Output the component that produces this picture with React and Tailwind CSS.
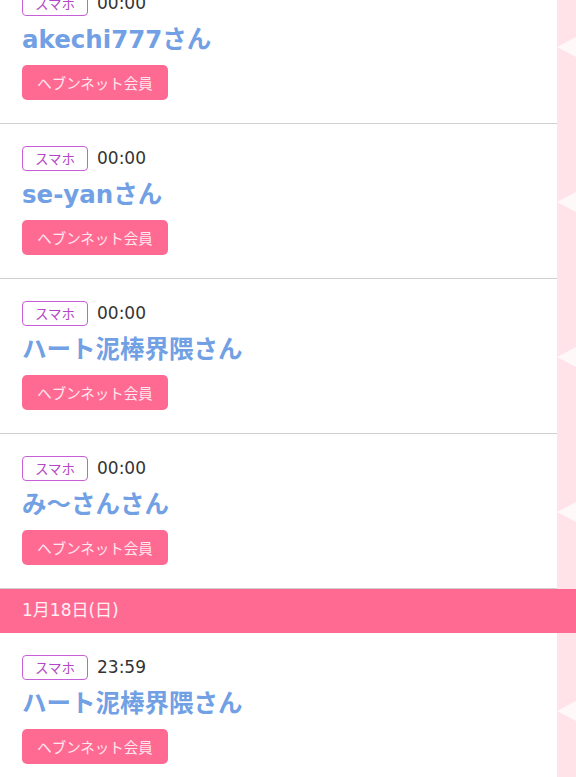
const entries = [
  { time: "00:00", name: "akechi777さん" },
  { time: "00:00", name: "se-yanさん" },
  { time: "00:00", name: "ハート泥棒界隈さん" },
  { time: "00:00", name: "み〜さんさん" },
  { date: "1月18日(日)" },
  { time: "23:59", name: "ハート泥棒界隈さん" },
];

function Row({ time, name }) {
  return (
    <div className="flex">
      <div className="flex-1 border-b border-[#d0d0d0] bg-white pl-[22px] pt-[22px] pb-[23px]">
        <div className="flex h-[25px] items-center gap-[9px]">
          <span className="flex h-[25px] w-[66px] items-center justify-center rounded-[4px] border-[1.5px] border-[#c760d6] font-['Noto_Sans_CJK_JP',sans-serif] text-[13.5px] text-[#b447c6]">
            スマホ
          </span>
          <span className="font-['DejaVu_Sans',sans-serif] text-[17px] leading-none text-[#333333]">
            {time}
          </span>
        </div>
        <div className="mt-[7px] font-['DejaVu_Sans','Noto_Sans_CJK_JP',sans-serif] text-[24.5px] font-bold leading-[34px] text-[#72a0e4]">
          {name}
        </div>
        <button className="mt-[8px] flex h-[35px] w-[146px] items-center justify-center rounded-[5px] bg-[#ff6a93] font-['Noto_Sans_CJK_JP',sans-serif] text-[14.5px] text-white/85">
          ヘブンネット会員
        </button>
      </div>
      <div className="flex w-[19px] items-center bg-[#ffe3e8]">
        <svg width="19" height="20" viewBox="0 0 19 20" className="block">
          <polygon points="0,10 19,0 19,20" fill="#fff8f9" />
        </svg>
      </div>
    </div>
  );
}

export default function App() {
  return (
    <div className="-mt-[31px] w-[576px] overflow-hidden bg-white">
      {entries.map((e, i) =>
        e.date ? (
          <div
            key={i}
            className="flex h-[44px] items-center bg-[#ff6a93] pl-[22px] font-['DejaVu_Sans','Noto_Sans_CJK_JP',sans-serif] text-[17px] text-white/90"
          >
            {e.date}
          </div>
        ) : (
          <Row key={i} time={e.time} name={e.name} />
        )
      )}
    </div>
  );
}
